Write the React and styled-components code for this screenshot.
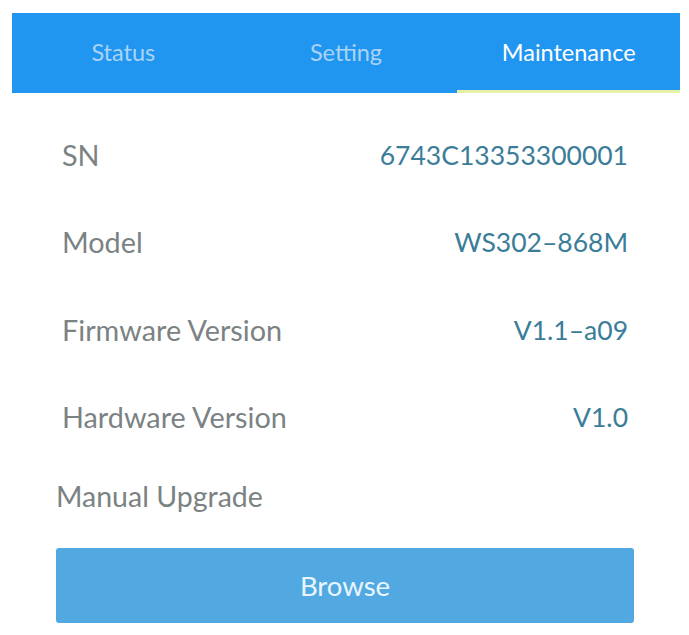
import React from "react";
import styled, { createGlobalStyle } from "styled-components";

const GlobalStyle = createGlobalStyle`
  html, body {
    margin: 0;
    padding: 0;
    background: #ffffff;
  }
  body {
    font-family: "Lato", "Noto Sans", sans-serif;
  }
`;

const Page = styled.div`
  width: 689px;
  height: 635px;
  padding: 13px 9px 0 12px;
  box-sizing: border-box;
  overflow: hidden;
`;

const TabBar = styled.div`
  display: grid;
  grid-template-columns: repeat(3, 1fr);
  height: 80px;
  background: #2196f0;
`;

const Tab = styled.div`
  display: flex;
  align-items: center;
  justify-content: center;
  padding-top: 1px;
  font-size: 23.5px;
  color: ${(p) => (p.active ? "#ffffff" : "#a9d3f7")};
  border-bottom: 3px solid ${(p) => (p.active ? "#e6f1a8" : "transparent")};
  box-sizing: border-box;
`;

const Content = styled.div`
  padding: 18px 52px 0 44px;
`;

const Row = styled.div`
  display: flex;
  justify-content: space-between;
  align-items: center;
  height: 87.5px;
  padding-left: 6px;
`;

const Label = styled.span`
  font-size: 28.8px;
  color: #7b8283;
`;

const Value = styled.span`
  font-size: 26.5px;
  color: #3b7d99;
`;

const SectionTitle = styled.div`
  font-size: 28.5px;
  color: #7b8283;
  margin-top: 18px;
`;

const BrowseButton = styled.button`
  display: block;
  width: 578px;
  height: 75px;
  margin-top: 35px;
  border: none;
  border-radius: 3px;
  background: #52a9e2;
  color: #e9f6ff;
  font-family: "Lato", "Noto Sans", sans-serif;
  font-size: 27.5px;
`;

const info = [
  ["SN", "6743C13353300001"],
  ["Model", "WS302–868M"],
  ["Firmware Version", "V1.1–a09"],
  ["Hardware Version", "V1.0"],
];

export default function App() {
  return (
    <Page>
      <GlobalStyle />
      <TabBar>
        <Tab>Status</Tab>
        <Tab>Setting</Tab>
        <Tab active>Maintenance</Tab>
      </TabBar>
      <Content>
        {info.map(([k, v]) => (
          <Row key={k}>
            <Label>{k}</Label>
            <Value>{v}</Value>
          </Row>
        ))}
        <SectionTitle>Manual Upgrade</SectionTitle>
        <BrowseButton>Browse</BrowseButton>
      </Content>
    </Page>
  );
}
